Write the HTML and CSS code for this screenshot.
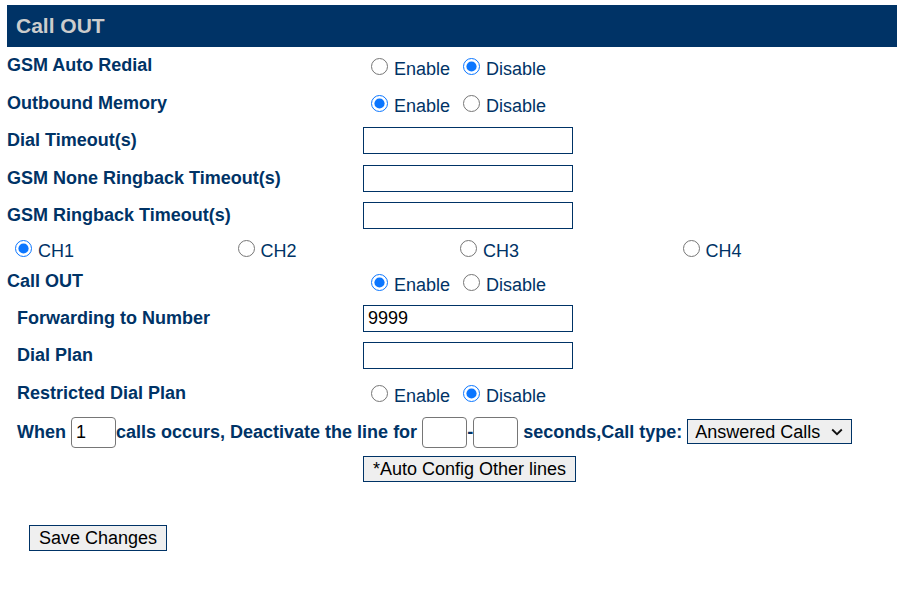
FILE: index.html
```html
<!DOCTYPE html>
<html>
<head>
<meta charset="utf-8">
<title>Call OUT</title>
<link rel="stylesheet" href="styles.css">
</head>
<body>
<div class="page">
  <div class="header">Call OUT</div>

  <div class="row">
    <div class="label">GSM Auto Redial</div>
    <div class="value opts">
      <label class="opt"><input type="radio" name="redial">Enable</label>
      <label class="opt"><input type="radio" name="redial" checked>Disable</label>
    </div>
  </div>

  <div class="row">
    <div class="label">Outbound Memory</div>
    <div class="value opts">
      <label class="opt"><input type="radio" name="mem" checked>Enable</label>
      <label class="opt"><input type="radio" name="mem">Disable</label>
    </div>
  </div>

  <div class="row">
    <div class="label">Dial Timeout(s)</div>
    <div class="value"><input class="text" type="text"></div>
  </div>

  <div class="row">
    <div class="label">GSM None Ringback Timeout(s)</div>
    <div class="value"><input class="text" type="text"></div>
  </div>

  <div class="row">
    <div class="label">GSM Ringback Timeout(s)</div>
    <div class="value"><input class="text" type="text"></div>
  </div>

  <div class="row ch-row">
    <label class="opt ch"><input type="radio" name="ch" checked>CH1</label>
    <label class="opt ch"><input type="radio" name="ch">CH2</label>
    <label class="opt ch"><input type="radio" name="ch">CH3</label>
    <label class="opt ch"><input type="radio" name="ch">CH4</label>
  </div>

  <div class="row callout-row">
    <div class="label">Call OUT</div>
    <div class="value opts">
      <label class="opt"><input type="radio" name="co" checked>Enable</label>
      <label class="opt"><input type="radio" name="co">Disable</label>
    </div>
  </div>

  <div class="row">
    <div class="label indent">Forwarding to Number</div>
    <div class="value"><input class="text" type="text" value="9999"></div>
  </div>

  <div class="row">
    <div class="label indent">Dial Plan</div>
    <div class="value"><input class="text" type="text"></div>
  </div>

  <div class="row">
    <div class="label indent">Restricted Dial Plan</div>
    <div class="value opts">
      <label class="opt"><input type="radio" name="rdp">Enable</label>
      <label class="opt"><input type="radio" name="rdp" checked>Disable</label>
    </div>
  </div>

  <div class="row when-row">
    <div class="when">When <input class="small" type="text" value="1"><span class="after1">calls occurs, Deactivate the line for</span> <input class="small" type="text">-<input class="small" type="text"> seconds,Call type: <span class="selwrap"><select class="sel"><option>Answered Calls</option><option>All Calls</option></select><svg class="chev" width="12" height="8" viewBox="0 0 12 8"><path d="M1.2 1.5 L6 6.2 L10.8 1.5" fill="none" stroke="#111" stroke-width="1.8"/></svg></span></div>
  </div>

  <div class="row btn-row">
    <div class="label"></div>
    <div class="value"><button class="btn" type="button">*Auto Config Other lines</button></div>
  </div>

  <div class="save">
    <button class="btn" type="button">Save Changes</button>
  </div>
</div>
</body>
</html>
```

FILE: styles.css
```css
html, body {
  margin: 0;
  padding: 0;
  background: #ffffff;
}

body {
  font-family: "Liberation Sans", Arial, sans-serif;
  font-size: 18px;
  color: #003366;
}

.page {
  padding: 5px 7px;
  width: 890px;
}

.header {
  background: #003366;
  color: #cccccc;
  font-weight: bold;
  font-size: 21px;
  height: 42px;
  line-height: 42px;
  padding-left: 9px;
  box-sizing: border-box;
}

.row {
  display: flex;
  align-items: center;
  height: 37.5px;
}

.ch-row {
  height: 29px;
}

.callout-row {
  height: 36px;
}

.when-row {
  height: 39px;
  padding-top: 1px;
  box-sizing: border-box;
}

.btn-row {
  height: 36px;
}

.label {
  width: 356px;
  flex: none;
  font-weight: bold;
  box-sizing: border-box;
}

.label.indent {
  padding-left: 10px;
}

.value {
  display: flex;
  align-items: center;
}

.opts {
  padding-top: 7px;
}

.opt {
  display: flex;
  align-items: center;
  line-height: 21px;
}

.opt + .opt {
  margin-left: 5px;
}

.opt input[type="radio"] {
  width: 17px;
  height: 17px;
  margin: 0 6px 6px 8px;
  accent-color: #0b76ff;
}

.ch-row .opt {
  width: 222.5px;
  margin-left: 0;
  padding-top: 4px;
}

.text {
  width: 210px;
  height: 27px;
  box-sizing: border-box;
  border: 1px solid #003366;
  font-family: "Liberation Sans", Arial, sans-serif;
  font-size: 18px;
  padding: 0 4px;
  margin: 0;
  color: #000;
  outline: none;
}

.when {
  padding-left: 10px;
  font-weight: bold;
  white-space: nowrap;
}

.small {
  width: 45px;
  height: 31px;
  box-sizing: border-box;
  border: 1px solid #767676;
  border-radius: 4px;
  font-family: "Liberation Sans", Arial, sans-serif;
  font-size: 18px;
  padding: 0 4px;
  margin: 0;
  vertical-align: baseline;
  color: #000;
}

.selwrap {
  position: relative;
  display: inline-block;
}

.sel {
  -webkit-appearance: none;
  appearance: none;
  width: 165px;
  height: 25px;
  border: 1px solid #003366;
  border-radius: 0;
  background: #efefef;
  color: #000;
  font-family: "Liberation Sans", Arial, sans-serif;
  font-size: 18px;
  padding: 0 7px;
  margin: 0;
  vertical-align: baseline;
}

.chev {
  position: absolute;
  right: 9px;
  top: 9px;
  pointer-events: none;
}

.btn {
  font-family: "Liberation Sans", Arial, sans-serif;
  font-size: 18px;
  color: #000;
  background: #efefef;
  border: 1px solid #003366;
  border-radius: 0;
  padding: 1px 9px;
  height: 26px;
  margin: 0;
  line-height: 20px;
}

.save {
  margin-top: 38px;
  padding-left: 22px;
}
```
